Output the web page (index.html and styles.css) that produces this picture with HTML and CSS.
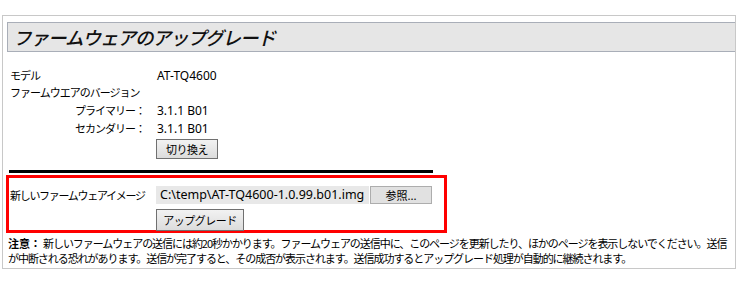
FILE: index.html
```html
<!DOCTYPE html>
<html lang="ja">
<head>
    <meta charset="UTF-8">
    <title>ファームウェアのアップグレード</title>
    <link rel="stylesheet" href="styles.css">
</head>
<body>
    <div class="frame">
        <h1 class="title"><span class="title-text">ファームウェアのアップグレード</span></h1>

        <div class="info">
            <div class="jp">モデル</div>
            <div class="val">AT-TQ4600</div>
            <div class="jp full">ファームウエアのバージョン</div>
            <div class="jp sub">プライマリー：</div>
            <div class="val">3.1.1 B01</div>
            <div class="jp sub">セカンダリー：</div>
            <div class="val">3.1.1 B01</div>
            <div></div>
            <div><button class="btn btn-switch">切り換え</button></div>
        </div>

        <div class="rule"></div>

        <div class="upload">
            <div class="jp upload-label">新しいファームウェアイメージ</div>
            <div class="file">
                <span class="file-name">C:\temp\AT-TQ4600-1.0.99.b01.img</span>
                <button class="file-browse">参照...</button>
            </div>
            <div></div>
            <div><button class="btn btn-upgrade">アップグレード</button></div>
        </div>

        <p class="notice"><b class="notice-head">注意：</b>新しいファームウェアの送信には約20秒かかります。ファームウェアの送信中に、このページを更新したり、ほかのページを表示しないでください。送信が中断される恐れがあります。送信が完了すると、その成否が表示されます。送信成功するとアップグレード処理が自動的に継続されます。</p>
    </div>
</body>
</html>
```

FILE: styles.css
```css
body {
    margin: 0;
    background-color: #fff;
    color: #000;
    font-family: 'Noto Sans', 'Noto Sans CJK JP', sans-serif;
    font-size: 12px;
}

.frame {
    margin: 15px 0 0 2px;
    width: 734px;
    box-sizing: border-box;
    border: 1px solid #c8c8c8;
    padding: 6px 0 2px 0;
}

.title {
    margin: 0 0 0 4px;
    height: 28px;
    line-height: 28px;
    padding-left: 7px;
    background-color: #e6e6e6;
    border: 1px solid #a9aeb8;
    border-right: none;
    font-family: 'Noto Sans CJK JP', sans-serif;
    font-size: 18.5px;
    font-weight: 500;
    letter-spacing: -1px;
    color: #111;
}

/* 日本語フォントに斜体がないので傾ける */
.title-text {
    display: inline-block;
    transform: skewX(-14deg);
}

.jp {
    font-family: 'Noto Sans CJK JP', sans-serif;
    font-size: 11px;
    letter-spacing: -1px;
}

.val {
    font-size: 12px;
}

.info {
    display: grid;
    grid-template-columns: 147px auto;
    grid-template-rows: 16px 18px 18px 18px auto;
    align-items: center;
    margin: 15px 0 0 7px;
}

.info .full {
    grid-column: 1 / 3;
}

.info .sub {
    text-align: right;
    padding-right: 12px;
}

.btn {
    font-family: 'Noto Sans CJK JP', sans-serif;
    font-size: 11px;
    letter-spacing: -0.5px;
    background: linear-gradient(#f2f2f2, #dcdcdc);
    border: 1px solid #707070;
    border-radius: 0;
    padding: 0;
    color: #000;
}

.btn-switch {
    width: 62px;
    height: 20px;
    margin: 2px 0 0 -1px;
}

.rule {
    margin: 11px 0 0 6px;
    width: 424px;
    height: 3px;
    background-color: #000;
}

.upload {
    display: grid;
    grid-template-columns: 146px auto;
    align-items: center;
    row-gap: 5px;
    margin: 2px 0 0 3px;
    width: 441px;
    box-sizing: border-box;
    border: 3px solid #f00;
    padding: 8px 0 0 1px;
    height: 58px;
}

.upload-label {
    letter-spacing: -1.3px;
}

.file {
    display: flex;
    height: 18px;
}

.file-name {
    width: 213px;
    background-color: #e8e8e8;
    padding-left: 4px;
    box-sizing: border-box;
    line-height: 18px;
    font-size: 12.5px;
    white-space: nowrap;
    overflow: hidden;
}

.file-browse {
    width: 62px;
    height: 18px;
    margin-left: 1px;
    background-color: #e1e1e1;
    border: 1px solid #adadad;
    padding: 0;
    font-family: 'Noto Sans CJK JP', sans-serif;
    font-size: 11px;
    color: #000;
}

.btn-upgrade {
    width: 88px;
    height: 22px;
}

.notice {
    margin: 3px 0 0 5px;
    width: 727px;
    font-family: 'Noto Sans CJK JP', sans-serif;
    font-size: 11px;
    letter-spacing: -1.05px;
    line-height: 15px;
}

.notice-head {
    display: inline-block;
    letter-spacing: 0;
    margin-right: 2px;
}
```
